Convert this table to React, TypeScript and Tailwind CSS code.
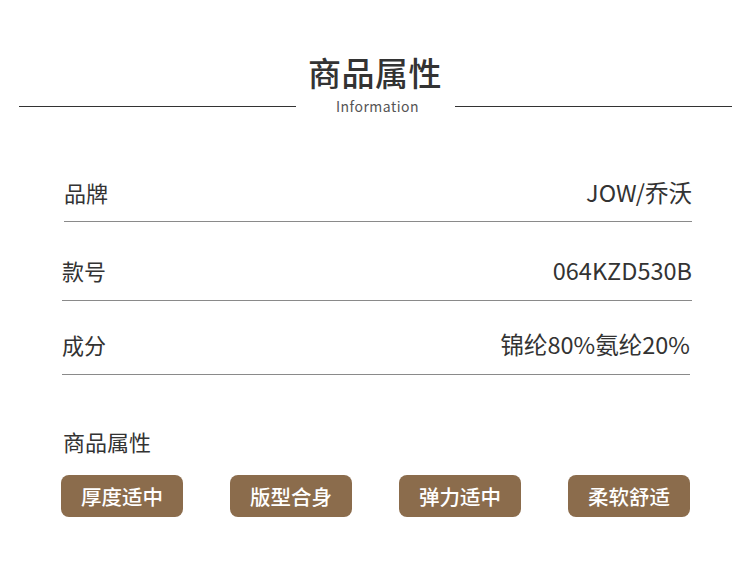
const font = { fontFamily: '"Noto Sans CJK SC", "Noto Sans", sans-serif' };

const rows = [
  { label: "品牌", value: "JOW/乔沃", mt: "mt-[61px]", pb: "pb-[14px]", ml: "ml-[64px]", w: "w-[628px]" },
  { label: "款号", value: "064KZD530B", mt: "mt-[33px]", pb: "pb-[15px]", ml: "ml-[62px]", w: "w-[630px]" },
  { label: "成分", value: "锦纶80%氨纶20%", mt: "mt-[28px]", pb: "pb-[15px]", ml: "ml-[62px]", w: "w-[628px]" },
];

const tags = ["厚度适中", "版型合身", "弹力适中", "柔软舒适"];

export default function App() {
  return (
    <div className="w-[750px] h-[571px] bg-white text-[#333] overflow-hidden" style={font}>
      <h1 className="mt-[52px] text-center text-[33px] leading-[40px] font-medium tracking-[0.5px] text-[#333]">
        商品属性
      </h1>
      <div className="mt-[4px] flex items-center h-[20px]">
        <div className="ml-[19px] w-[277px] h-px bg-[#333]" />
        <span className="flex-1 pl-[4px] text-center text-[14px] leading-[20px] text-[#555] tracking-[0.5px]">
          Information
        </span>
        <div className="mr-[18px] w-[277px] h-px bg-[#333]" />
      </div>

      {rows.map((r) => (
        <div
          key={r.label}
          className={`${r.mt} ${r.pb} ${r.ml} ${r.w} flex justify-between items-center border-b border-[#8a8a8a]`}
        >
          <span className="text-[22px] leading-[30px] text-[#333]">{r.label}</span>
          <span className="text-[23.5px] leading-[30px] text-[#333]">{r.value}</span>
        </div>
      ))}

      <div className="mt-[51px] ml-[63px] text-[22px] leading-[30px] text-[#333]">商品属性</div>

      <div className="mt-[19px] ml-[61px] flex gap-[47px]">
        {tags.map((t) => (
          <div
            key={t}
            className="w-[122px] h-[42px] rounded-[8px] bg-[#8b6c4c] text-white text-[20.5px] flex items-center justify-center font-medium"
          >
            {t}
          </div>
        ))}
      </div>
    </div>
  );
}
